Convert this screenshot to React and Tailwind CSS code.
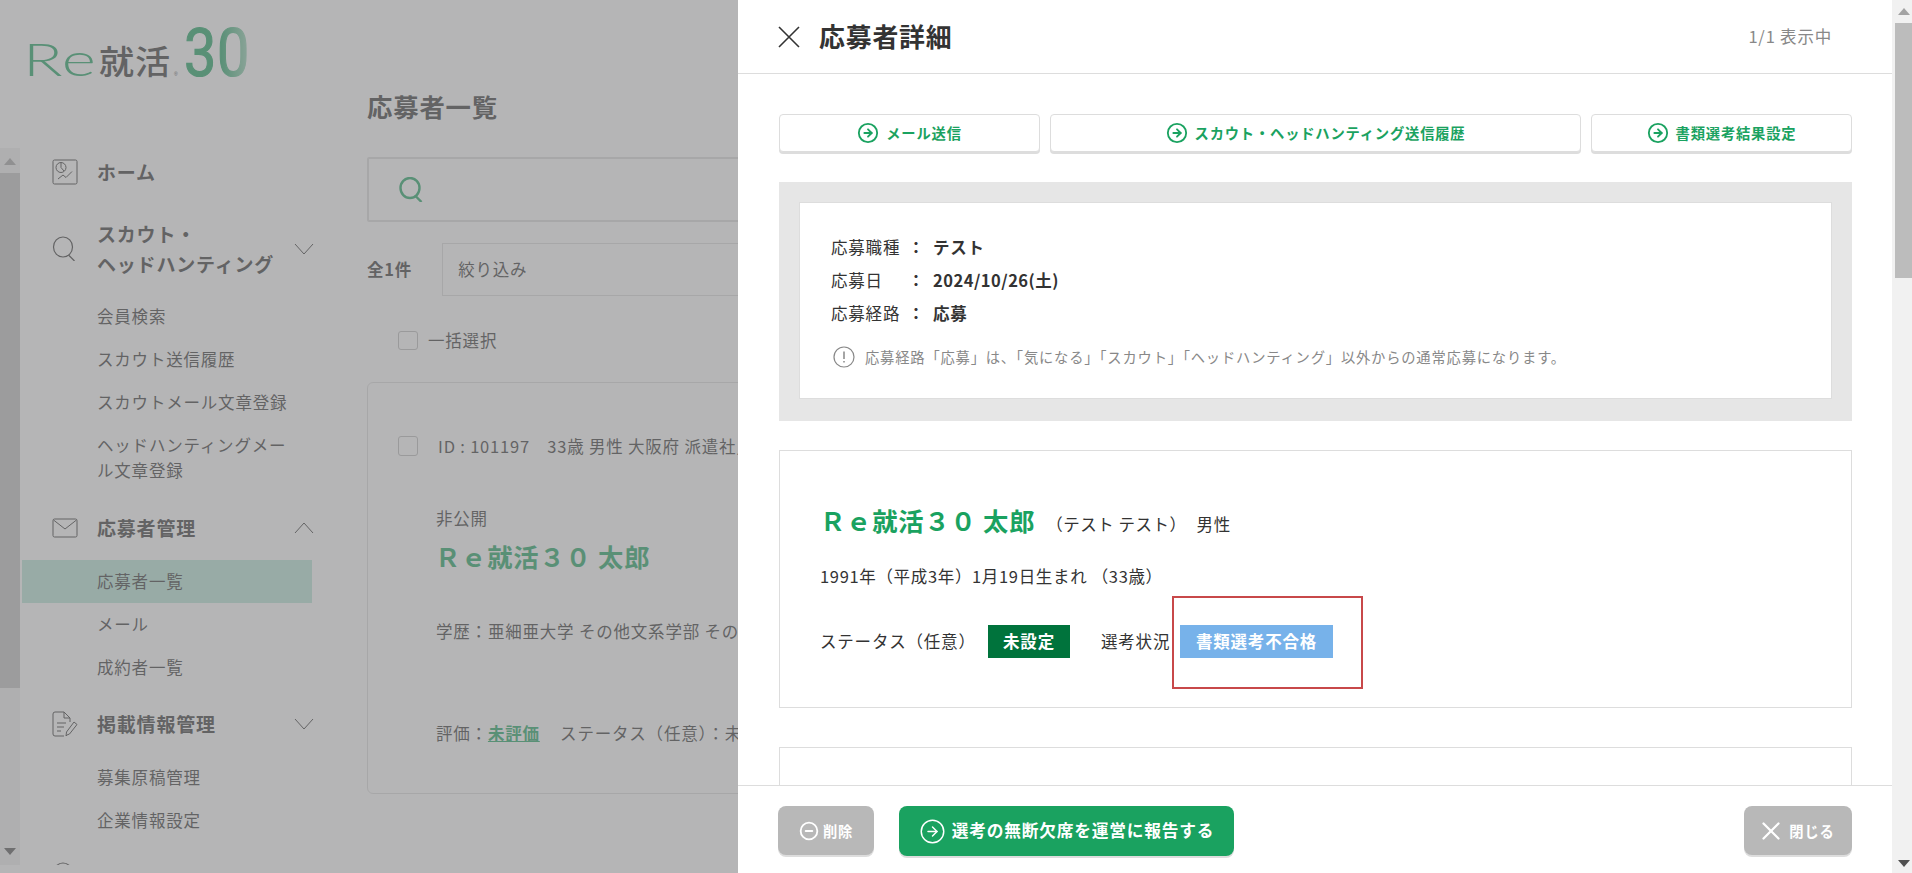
import React from "react";
import { CircleArrowRight, CircleMinus, X } from "lucide-react";

const Chevron = ({ up }) => (
  <svg width="20" height="12" viewBox="0 0 20 12" fill="none" stroke="#333" strokeWidth="1" className="shrink-0">
    {up ? <polyline points="1,11 10,1 19,11" /> : <polyline points="1,1 10,11 19,1" />}
  </svg>
);

const Logo = () => (
  <svg width="240" height="92" viewBox="0 0 240 92" className="block">
    <defs>
      <linearGradient id="g30" x1="0" x2="1" y1="0" y2="0">
        <stop offset="0" stopColor="#1aa260" />
        <stop offset="0.55" stopColor="#1aa260" />
        <stop offset="1" stopColor="#9fd6bb" />
      </linearGradient>
    </defs>
    <text x="3" y="76" fontFamily="Lato" fontWeight="300" fontSize="45" fill="#1aa260" textLength="74" lengthAdjust="spacingAndGlyphs">Re</text>
    <text x="79" y="74" fontFamily="Noto Sans CJK JP" fontWeight="500" fontSize="33" fill="#333" textLength="72" lengthAdjust="spacingAndGlyphs">就活</text>
    <text x="154" y="76" fontFamily="Liberation Sans" fontSize="5" fill="#333">®</text>
    <text x="164" y="76" fontFamily="Roboto" fontWeight="400" fontSize="67" fill="url(#g30)" stroke="url(#g30)" strokeWidth="1.2" textLength="66" lengthAdjust="spacingAndGlyphs">30</text>
  </svg>
);

const HomeIcon = () => (
  <svg width="26" height="26" viewBox="0 0 26 26" fill="none" stroke="#333" strokeWidth="1" className="shrink-0">
    <rect x="1" y="1" width="24" height="24" rx="1.5" />
    <circle cx="9" cy="8.5" r="5" />
    <path d="M9 3.5v5l3 3.5" />
    <path d="M6 20l5-4 3 2.5 6-6" />
  </svg>
);
const SearchIcon = ({ color = "#333", w = 1.2, size = 25 }) => (
  <svg width={size} height={size} viewBox="0 0 25 25" fill="none" stroke={color} strokeWidth={w} className="shrink-0">
    <ellipse cx="11" cy="11" rx="9.5" ry="10" />
    <path d="M16.5 19l6 6" />
  </svg>
);
const MailIcon = () => (
  <svg width="26" height="20" viewBox="0 0 26 20" fill="none" stroke="#333" strokeWidth="1" className="shrink-0">
    <rect x="1" y="1" width="24" height="18" rx="1.5" />
    <path d="M1.5 2l11.5 9 11.5-9" />
  </svg>
);
const DocIcon = () => (
  <svg width="26" height="26" viewBox="0 0 26 26" fill="none" stroke="#333" strokeWidth="1" className="shrink-0">
    <path d="M18 11V7l-6-6H3a2 2 0 0 0-2 2v20a2 2 0 0 0 2 2h9" />
    <path d="M12 1v6h6" />
    <path d="M5 12h9M5 16h7M5 20h4" />
    <path d="M15 24l-1 1 .5-4L22 11l3 2.5L17.5 23z" />
  </svg>
);

const Section = ({ icon, children, chevron, className }) => (
  <div className={"flex items-center pl-[32px] " + className}>
    <div className="w-[45px] flex justify-start">{icon}</div>
    <div className="w-[197px] text-[19px] leading-[29.5px] font-bold text-[#333]">{children}</div>
    {chevron}
  </div>
);
const Sub = ({ children, active, className = "" }) => (
  <div className={"pl-[77px] pr-[14px] py-[9px] text-[16.5px] leading-[25px] w-[292px] text-[#333] " + (active ? "bg-[#b6e6d7] " : "") + className}>{children}</div>
);

const ArrowBtn = ({ children }) => (
  <div className="flex items-center justify-center gap-[7px] h-[38px] rounded-[4px] bg-white border border-[#ddd] shadow-[0_2px_0_#ddd] text-[14.3px] font-bold text-[#1aa260]">
    <CircleArrowRight size={22} strokeWidth={2} />
    <span>{children}</span>
  </div>
);

const Triangle = ({ up, color }) => (
  <svg width="12" height="7" viewBox="0 0 12 7" fill={color}>
    <polygon points={up ? "6,0 12,7 0,7" : "0,0 12,0 6,7"} />
  </svg>
);

const Info = ({ label, children, valueClass = "" }) => (
  <div className="flex h-[33px] items-center text-[16.5px]">
    <span className="w-[76px] text-[#333]">{label}</span>
    <span className="w-[18px] text-center font-bold tracking-normal">：</span>
    <span className={"ml-[8px] font-bold text-[#333] " + valueClass}>{children}</span>
  </div>
);

export default function App() {
  return (
    <div className="relative h-[873px] w-[1912px] overflow-hidden bg-white text-[#333] tracking-[0.05em] font-['Noto_Sans_CJK_JP','Noto_Sans',sans-serif]">
      {/* page below the drawer */}
      <div className="flex h-full">
        <aside className="w-[367px] shrink-0 flex flex-col">
          <div className="h-[148px] pl-[20px] shrink-0 overflow-hidden">
            <Logo />
          </div>
          <div className="h-[717px] flex overflow-hidden">
            <div className="w-[20px] shrink-0 flex flex-col items-center bg-[#f1f1f1]">
              <div className="h-[25px] flex items-center justify-center pt-[2px]"><Triangle up color="#a3a3a3" /></div>
              <div className="h-[515px] w-full bg-[#c1c1c1] shrink-0" />
              <div className="flex-1" />
              <div className="h-[24px] flex items-center justify-center pb-[4px]"><Triangle color="#505050" /></div>
            </div>
            <nav className="flex-1 min-w-0">
              <Section className="h-[48px]" icon={<HomeIcon />}>ホーム</Section>
              <Section className="mt-[23px] h-[59px]" icon={<SearchIcon />} chevron={<Chevron />}>スカウト・<br />ヘッドハンティング</Section>
              <div className="mt-[17px]">
                <Sub>会員検索</Sub>
                <Sub>スカウト送信履歴</Sub>
                <Sub>スカウトメール文章登録</Sub>
                <Sub>ヘッドハンティングメール文章登録</Sub>
              </div>
              <Section className="mt-[21px] h-[30px]" icon={<MailIcon />} chevron={<Chevron up />}>応募者管理</Section>
              <div className="mt-[17px] ml-[2px] [&>div]:pl-[75px] [&>div]:w-[290px]">
                <Sub active>応募者一覧</Sub>
                <Sub>メール</Sub>
                <Sub>成約者一覧</Sub>
              </div>
              <Section className="mt-[20px] h-[30px]" icon={<DocIcon />} chevron={<Chevron />}>掲載情報管理</Section>
              <div className="mt-[17px]">
                <Sub>募集原稿管理</Sub>
                <Sub>企業情報設定</Sub>
              </div>
              <div className="pl-[32px] mt-[20px]"><SearchIcon /></div>
            </nav>
          </div>
        </aside>
        <main className="flex-1 min-w-0 pt-[88px]">
          <h1 className="text-[25.4px] leading-[37px] font-bold text-[#333]">応募者一覧</h1>
          <div className="mt-[32px] h-[65px] border-2 border-[#ddd] bg-white rounded-[2px] flex items-center pl-[30px]">
            <SearchIcon color="#1aa260" w={2.4} />
          </div>
          <div className="mt-[21px] flex items-center gap-[30px]">
            <span className="font-bold text-[16.5px]">全1件</span>
            <div className="flex-1 h-[53px] border border-[#ddd] bg-white flex items-center pl-[15px] text-[16.5px]">絞り込み</div>
          </div>
          <label className="mt-[35px] ml-[31px] flex items-center gap-[10px] h-[19px] text-[16.5px]">
            <span className="w-[20px] h-[19px] bg-white border border-[#bbb] rounded-[3px]" />
            一括選択
          </label>
          <div className="mt-[32px] h-[412px] border border-[#ddd] rounded-[6px] bg-white pt-[53px] pl-[30px] text-[16.5px] whitespace-nowrap">
            <div className="flex items-center gap-[20px] h-[20px]">
              <span className="w-[20px] h-[20px] bg-white border border-[#bbb] rounded-[3px]" />
              <span>ID : 101197　33歳 男性 大阪府 派遣社員</span>
            </div>
            <div className="pl-[38px]">
              <div className="mt-[49px] leading-[26px]">非公開</div>
              <div className="mt-[5px] ml-[-1px] leading-[40px] text-[25.3px] font-bold text-[#1aa260]">Ｒｅ就活３０ 太郎</div>
              <div className="mt-[42px] leading-[26px]">学歴：亜細亜大学 その他文系学部 その他</div>
              <div className="mt-[76px] leading-[26px]">評価：<span className="font-bold text-[#1aa260] underline">未評価</span><span className="ml-[3px]">　ステータス（任意）：未設定</span></div>
            </div>
          </div>
        </main>
      </div>

      {/* dimming layer */}
      <div className="absolute inset-0 bg-[#848486]/60" />

      {/* drawer */}
      <section className="absolute top-0 bottom-0 left-[738px] w-[1154px] bg-white flex flex-col">
        <header className="h-[74px] shrink-0 border-b border-[#ddd] flex items-center pl-[40px] pr-[60px]">
          <svg width="22" height="22" viewBox="0 0 22 22" fill="none" stroke="#333" strokeWidth="1.6" className="shrink-0">
            <path d="M1 1l20 20M21 1L1 21" />
          </svg>
          <h2 className="ml-[19px] text-[25.9px] font-bold text-[#333]">応募者詳細</h2>
          <span className="ml-auto text-[16.5px] text-[#888]">1/1 表示中</span>
        </header>
        <div className="flex-1 min-h-0 overflow-hidden pl-[41px] pr-[40px] pt-[40px]">
          <div className="grid grid-cols-[261px_531px_261px] gap-x-[10px]">
            <ArrowBtn>メール送信</ArrowBtn>
            <ArrowBtn>スカウト・ヘッドハンティング送信履歴</ArrowBtn>
            <ArrowBtn>書類選考結果設定</ArrowBtn>
          </div>
          <div className="mt-[30px] h-[239px] bg-[#e6e6e6] p-[20px]">
            <div className="h-[197px] bg-white border border-[#ddd] pl-[31px] pt-[28px]">
              <Info label="応募職種">テスト</Info>
              <Info label="応募日" valueClass="tracking-[0.03em]">2024/10/26(土)</Info>
              <Info label="応募経路">応募</Info>
              <div className="mt-[16px] flex items-center gap-[10px] text-[14.3px] text-[#888]">
                <svg width="22" height="22" viewBox="0 0 22 22" fill="none" stroke="#888" strokeWidth="1.2" className="ml-[2px] shrink-0">
                  <circle cx="11" cy="11" r="10" />
                  <path d="M11 5.5v7.5M11 15v1.6" strokeWidth="1.5" />
                </svg>
                <span>応募経路「応募」は、「気になる」「スカウト」「ヘッドハンティング」以外からの通常応募になります。</span>
              </div>
            </div>
          </div>
          <div className="relative mt-[29px] h-[258px] border border-[#ddd] pl-[40px] pt-[49px]">
            <div className="flex items-baseline text-[16.5px]">
              <span className="text-[25.3px] leading-[40px] font-bold text-[#1aa260]">Ｒｅ就活３０ 太郎</span>
              <span className="ml-[11px] tracking-[0.03em]">（テスト テスト）</span>
              <span className="ml-[10px]">男性</span>
            </div>
            <div className="mt-[23px] leading-[26px] text-[16.5px] tracking-[0.04em]">1991年（平成3年）1月19日生まれ （33歳）</div>
            <div className="mt-[36px] flex items-center text-[16.5px]">
              <span className="w-[168px]">ステータス（任意）</span>
              <span className="w-[82px] h-[33px] flex items-center justify-center bg-[#00733c] text-white font-bold">未設定</span>
              <span className="ml-[31px] w-[79px]">選考状況</span>
              <span className="w-[153px] h-[33px] flex items-center justify-center bg-[#77b2ea] text-white font-bold">書類選考不合格</span>
            </div>
            <div className="absolute left-[392px] top-[145px] w-[191px] h-[93px] border-2 border-[#c8484a]" />
          </div>
          <div className="mt-[39px] h-[60px] border border-[#ddd]" />
        </div>
        <footer className="h-[88px] shrink-0 bg-white border-t border-[#ddd] flex items-start pt-[20px] pl-[40px] pr-[40px]">
          <div className="w-[96px] h-[49px] rounded-[8px] bg-[#b8b8b8] shadow-[0_2px_0_#ddd] flex items-center justify-center gap-[4px] text-white text-[14.3px] font-bold">
            <CircleMinus size={20} strokeWidth={2.2} />
            <span>削除</span>
          </div>
          <div className="ml-[25px] w-[335px] h-[50px] rounded-[8px] bg-[#1aa260] shadow-[0_2px_0_#ddd] flex items-center justify-center gap-[6px] text-white text-[16.7px] font-bold">
            <CircleArrowRight size={27} strokeWidth={1.3} />
            <span>選考の無断欠席を運営に報告する</span>
          </div>
          <div className="ml-auto w-[108px] h-[49px] rounded-[8px] bg-[#b8b8b8] shadow-[0_2px_0_#ddd] flex items-center justify-center text-white text-[14.3px] font-bold">
            <X size={30} strokeWidth={1.8} className="mx-[-5px]" />
            <span className="ml-[8px]">閉じる</span>
          </div>
        </footer>
      </section>

      {/* window scrollbar */}
      <div className="absolute top-0 bottom-0 right-0 w-[20px] bg-[#f1f1f1] flex flex-col items-end">
        <div className="w-[17px] h-[23px] flex items-center justify-center"><Triangle up color="#a3a3a3" /></div>
        <div className="w-[17px] h-[255px] bg-[#bcbcbc]" />
        <div className="flex-1" />
        <div className="w-[17px] h-[20px] flex items-center justify-center"><Triangle color="#505050" /></div>
      </div>
    </div>
  );
}
